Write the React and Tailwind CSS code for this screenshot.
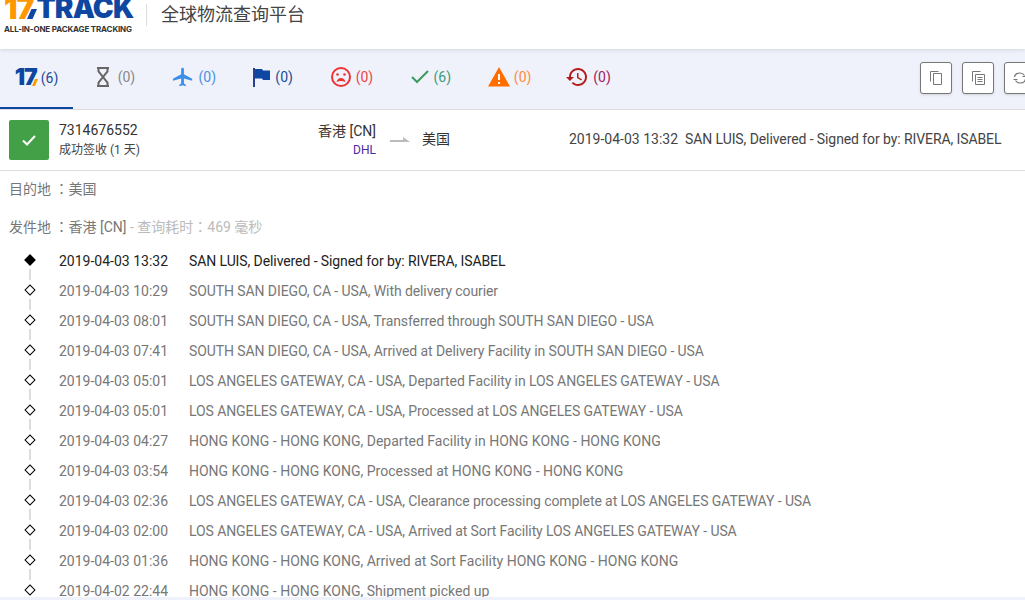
const FONT = "font-['Roboto','Noto_Sans_CJK_SC',sans-serif]";

const events = [
  ['2019-04-03 13:32', 'SAN LUIS, Delivered - Signed for by: RIVERA, ISABEL'],
  ['2019-04-03 10:29', 'SOUTH SAN DIEGO, CA - USA, With delivery courier'],
  ['2019-04-03 08:01', 'SOUTH SAN DIEGO, CA - USA, Transferred through SOUTH SAN DIEGO - USA'],
  ['2019-04-03 07:41', 'SOUTH SAN DIEGO, CA - USA, Arrived at Delivery Facility in SOUTH SAN DIEGO - USA'],
  ['2019-04-03 05:01', 'LOS ANGELES GATEWAY, CA - USA, Departed Facility in LOS ANGELES GATEWAY - USA'],
  ['2019-04-03 05:01', 'LOS ANGELES GATEWAY, CA - USA, Processed at LOS ANGELES GATEWAY - USA'],
  ['2019-04-03 04:27', 'HONG KONG - HONG KONG, Departed Facility in HONG KONG - HONG KONG'],
  ['2019-04-03 03:54', 'HONG KONG - HONG KONG, Processed at HONG KONG - HONG KONG'],
  ['2019-04-03 02:36', 'LOS ANGELES GATEWAY, CA - USA, Clearance processing complete at LOS ANGELES GATEWAY - USA'],
  ['2019-04-03 02:00', 'LOS ANGELES GATEWAY, CA - USA, Arrived at Sort Facility LOS ANGELES GATEWAY - USA'],
  ['2019-04-03 01:36', 'HONG KONG - HONG KONG, Arrived at Sort Facility HONG KONG - HONG KONG'],
  ['2019-04-02 22:44', 'HONG KONG - HONG KONG, Shipment picked up'],
];

const Hourglass = () => (
  <svg width="14" height="20" viewBox="0 0 14 20" fill="none" stroke="#666" strokeWidth="2">
    <path d="M1 1h12M1 19h12M2.500 1v3.500L11.500 15.500V19M11.500 1v3.500L2.500 15.500V19" />
  </svg>
);

const Plane = () => (
  <svg width="22" height="22" viewBox="0 0 24 24" fill="#3b8fe8">
    <path d="M22 16v-2l-9-5V3.500c0-.83-.67-1.500-1.500-1.500S10 2.670 10 3.500V9l-9 5v2l9-2.500V19l-2 1.500V22l3.500-1 3.500 1v-1.500L13 19v-5.500z" />
  </svg>
);

const Flag = () => (
  <svg width="17" height="20" viewBox="0 0 17 20">
    <rect x="0" y="1" width="2" height="19" fill="#2a3f8f" />
    <path d="M2 2h7l1 1.500h7V13h-7l-1-1.500H2z" fill="#0d47a1" />
  </svg>
);

const Sad = () => (
  <svg width="20" height="20" viewBox="0 0 20 20" fill="none" stroke="#ee3333" strokeWidth="2">
    <circle cx="10" cy="10" r="9" />
    <circle cx="6.500" cy="7.500" r="1.300" fill="#ee3333" stroke="none" />
    <circle cx="13.500" cy="7.500" r="1.300" fill="#ee3333" stroke="none" />
    <path d="M5.500 15c.5-2.500 2.500-4 4.500-4s4 1.500 4.500 4c-1.500-.8-3-1-4.500-1s-3 .2-4.500 1z" fill="#ee3333" stroke="none" />
  </svg>
);

const Check = () => (
  <svg width="18" height="14" viewBox="0 0 18 14" fill="none" stroke="#3d9a5f" strokeWidth="2">
    <path d="M1 7l5 5L17 1" />
  </svg>
);

const Warning = () => (
  <svg width="22" height="20" viewBox="0 0 22 20">
    <path d="M11 0l11 19.500H0z" fill="#ff6d00" />
    <path d="M10 7h2v6h-2zM10 15h2v2h-2z" fill="#fff" />
  </svg>
);

const History = () => (
  <svg width="22" height="20" viewBox="1 3 22 18" fill="#b71c1c">
    <path d="M13 3c-4.970 0-9 4.030-9 9H1l3.890 3.890.07.140L9 12H6c0-3.870 3.130-7 7-7s7 3.130 7 7-3.130 7-7 7c-1.930 0-3.680-.79-4.940-2.060l-1.420 1.420C8.270 19.990 10.510 21 13 21c4.970 0 9-4.030 9-9s-4.030-9-9-9zm-1 5v5l4.280 2.540.72-1.210-3.500-2.080V8H12z" />
  </svg>
);

const Mark17 = () => (
  <span className="relative text-[23px] leading-none font-black tracking-[-1px] text-[#0d47a1] font-['Inter',sans-serif]">
    17
    <svg width="6" height="7" viewBox="0 0 6 7" className="absolute right-[-1px] bottom-[3px]">
      <path d="M3 0h3L3 7H0z" fill="#ff9800" />
    </svg>
  </span>
);

const tabs = [
  { icon: <Hourglass />, count: 0, color: 'text-[#888]', gap: 'gap-[8px]' },
  { icon: <Plane />, count: 0, color: 'text-[#4a90e2]', gap: 'gap-[4px]' },
  { icon: <Flag />, count: 0, color: 'text-[#1a4a9c]', gap: 'gap-[5px]' },
  { icon: <Sad />, count: 0, color: 'text-[#ee4444]', gap: 'gap-[5px]' },
  { icon: <Check />, count: 6, color: 'text-[#3d9a7a]', gap: 'gap-[5px]' },
  { icon: <Warning />, count: 0, color: 'text-[#ff8a3c]', gap: 'gap-[4px]' },
  { icon: <History />, count: 0, color: 'text-[#a02060]', gap: 'gap-[5px]' },
];

export default function App() {
  return (
    <div className={`h-[600px] w-[1025px] overflow-hidden bg-white text-sm ${FONT}`}>
      <header className="relative z-10 flex h-[49px] items-start bg-white shadow-[0_1px_4px_rgba(0,0,0,0.12)]">
        <div className="ml-1 flex h-[34px] w-[130px] flex-col overflow-hidden">
          <div className="mt-[-5px] flex h-[25px] items-center text-[30px] leading-none font-black font-['Inter',sans-serif]">
            <span className="tracking-[-1px] text-[#ff9800]">17</span>
            <svg width="10" height="10" viewBox="0 0 9 9" className="mt-[13px] ml-[-6px] shrink-0">
              <path d="M4 0h5L5 9H0z" fill="#0d47a1" />
            </svg>
            <span className="ml-[-1px] text-[28px] tracking-[-0.8px] text-[#0d47a1]">TRACK</span>
          </div>
          <div className="mt-[5px] text-[8px] leading-[9px] font-bold tracking-[-0.15px] whitespace-nowrap text-[#333] font-['Inter',sans-serif]">
            ALL-IN-ONE PACKAGE TRACKING
          </div>
        </div>
        <div className="mt-1 ml-3 h-[22px] w-px bg-[#ddd]" />
        <div className="ml-[14px] text-lg leading-[30px] text-[#444]">全球物流查询平台</div>
      </header>

      <nav className="flex h-[61px] border-b border-[#ddd] bg-[#eff2fa]">
        <div className="flex w-[920px] shrink-0">
          <div className="mr-[3px] flex h-[60px] w-[73px] items-center justify-center gap-1 border-b-2 border-[#0d47a1] pb-[1px]">
            <Mark17 />
            <span className="text-[#1a4a9c]">(6)</span>
          </div>
          {tabs.map((t, i) => (
            <div key={i} className={`flex h-[56px] w-[78.850px] items-center justify-center ${t.gap}`}>
              {t.icon}
              <span className={t.color}>({t.count})</span>
            </div>
          ))}
        </div>
        <div className="flex shrink-0 gap-[10px] pt-[13px]">
          <button className="flex h-8 w-8 items-center justify-center rounded-[3px] border border-[#777] bg-white shadow-sm">
            <svg width="13" height="14" viewBox="0 0 13 14" fill="none" stroke="#777">
              <path d="M.5 10.500V.5h8M3.500 2.500h8v11h-8z" />
            </svg>
          </button>
          <button className="flex h-8 w-8 items-center justify-center rounded-[3px] border border-[#777] bg-white shadow-sm">
            <svg width="13" height="14" viewBox="0 0 13 14" fill="none" stroke="#777">
              <path d="M.5 10.500V.5h8M3.500 3.500h9v10h-9zM5.500 6.500h5M5.500 8.500h5M5.500 10.500h5" />
            </svg>
          </button>
          <button className="flex h-8 w-8 items-center justify-center rounded-[3px] border border-[#777] bg-white shadow-sm">
            <svg width="14" height="12" viewBox="0 0 14 12" fill="none" stroke="#777" strokeWidth="1.200">
              <path d="M1.500 5C2 2.500 4 1 7 1c2 0 3.500 1 4.500 2.500M12.500 7c-.5 2.500-2.500 4-5.500 4-2 0-3.500-1-4.500-2.500M.5 7.500h4M9.500 4.500h4" />
            </svg>
          </button>
        </div>
      </nav>

      <section className="flex h-[61px] items-center border-b border-[#ddd] pb-[1px] pl-[9px]">
        <div className="mt-[1px] flex h-10 w-10 shrink-0 items-center justify-center rounded-[2px] bg-[#43a047]">
          <svg width="14" height="11" viewBox="0 0 14 11" fill="none" stroke="#fff" strokeWidth="2">
            <path d="M1 5.500l4 4L13 1" />
          </svg>
        </div>
        <div className="ml-[10px] w-[220px] shrink-0">
          <div className="leading-[20px] text-[#333]">7314676552</div>
          <div className="text-xs leading-[20px] text-[#444]">成功签收 (1 天)</div>
        </div>
        <div className="w-[97px] shrink-0 text-right">
          <div className="leading-[20px] text-[#333]">香港 [CN]</div>
          <div className="text-xs leading-[18px] text-[#4a2aa0]">DHL</div>
        </div>
        <svg width="20" height="6" viewBox="0 0 20 6" className="ml-[14px] shrink-0">
          <path d="M0 3h13V0l7 5H0z" fill="#bbb" />
        </svg>
        <div className="mb-[2px] ml-3 w-[147px] shrink-0 text-[#333]">美国</div>
        <div className="mb-[2px] whitespace-nowrap text-[#444]">2019-04-03 13:32</div>
        <div className="mb-[2px] ml-[7px] tracking-[-0.09px] whitespace-nowrap text-[#444]">SAN LUIS, Delivered - Signed for by: RIVERA, ISABEL</div>
      </section>

      <div className="pt-[8px] pl-[9px] text-[#777] font-['Roboto','Noto_Sans_CJK_TC',sans-serif]">
        <div className="leading-[20px]">目的地 ：美国</div>
        <div className="mt-[18px] leading-[20px]">
          发件地 ：香港 [CN] <span className="text-[#bbb]">- 查询耗时：469 毫秒</span>
        </div>
      </div>

      <ul className="mt-[9px] h-[351px] overflow-hidden">
        {events.map(([time, text], i) => (
          <li key={i} className={`flex h-[30px] items-center ${i === 0 ? 'text-[#222]' : 'text-[#777]'}`}>
            <div className="relative flex h-[30px] w-[59px] shrink-0 items-center justify-center pb-[2px]">
              <span className={`ml-[1px] h-2 w-2 rotate-45 border border-black ${i === 0 ? 'bg-black' : 'bg-white'}`} />
              <span className="absolute top-[23px] left-[29px] h-[11px] w-[2px] bg-[#ddd]" />
            </div>
            <div className="w-[130px] shrink-0">{time}</div>
            <div className={`whitespace-nowrap ${text.startsWith('HONG') ? '' : 'tracking-[-0.09px]'}`}>{text}</div>
          </li>
        ))}
      </ul>
      <div className="h-[3px] bg-[#eff2fa]" />
    </div>
  );
}
